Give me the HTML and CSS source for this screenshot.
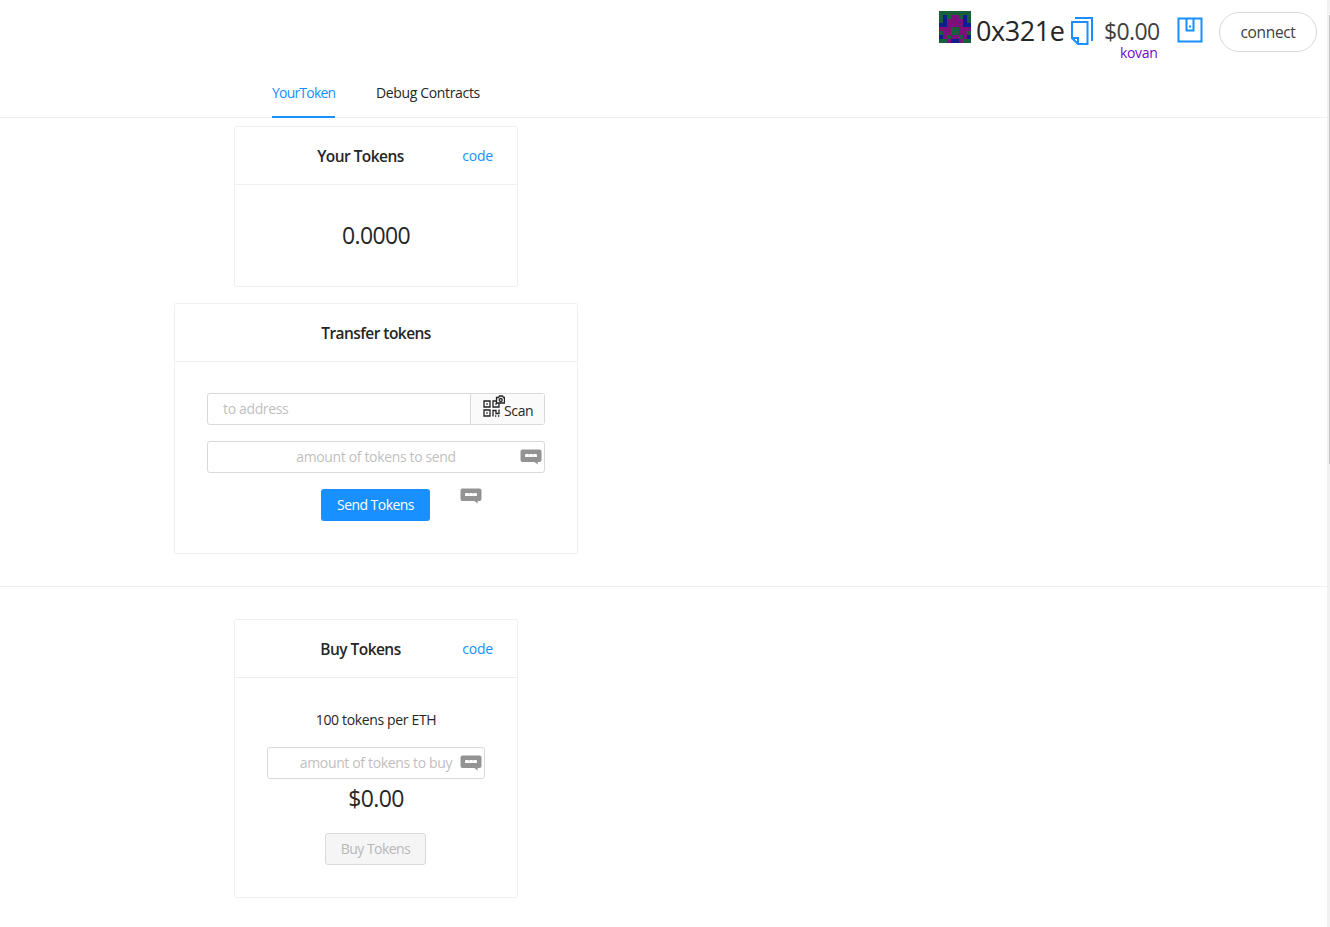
FILE: index.html
```html
<!DOCTYPE html>
<html lang="en">
<head>
<meta charset="utf-8">
<title>YourToken</title>
<link rel="stylesheet" href="styles.css">
</head>
<body>
<svg class="defs" width="0" height="0">
  <symbol id="bubble" viewBox="0 0 22 16">
    <path d="M2.500.500h17a2 2 0 0 1 2 2v8.500a2 2 0 0 1-2 2h-1.800v2.500l-3.200-2.500H2.500a2 2 0 0 1-2-2v-8.500a2 2 0 0 1 2-2z" fill="#939393"/>
    <path d="M5 5.500h12v2.500H5z" fill="#eee"/><path d="M5.500 6.500h3M9.500 6.500h3M13.500 6.500h3" stroke="#fff" stroke-width="3"/>
  </symbol>
</svg>
<div class="page">
  <header class="account">
    <svg class="blockie" viewBox="0 0 8 8" shape-rendering="crispEdges">
      <path fill="#7d107d" d="M0 0h8v8H0z"/>
      <path fill="#17603a" d="M0 0h8v1H0zM0 1h1v2H0zM7 1h1v2H7zM2 1h1v1H2zM5 1h1v1H5zM3 4h2v2H3zM0 5h1v1H0zM7 5h1v1H7zM2 6h1v1H2zM5 6h1v1H5zM0 7h2v1H0zM6 7h2v1H6z"/>
      <path fill="#0b1f91" d="M1 1h1v3H0V3h1zM6 1h1v2h1v1H6zM0 6h1v1H0zM7 6h1v1H7zM3 7h2v1H3z"/>
    </svg>
    <span class="address">0x321e</span>
    <svg class="copy" viewBox="0 0 24 29" fill="none" stroke="#1890ff" stroke-width="2"><path d="M5 2h17v23M2 6h15.500v22H8l-6-6zM2 22h6v6"/></svg>
    <div class="worth"><span class="balance">$0.00</span><span class="network">kovan</span></div>
    <svg class="wallet" viewBox="0 0 26 26" fill="none" stroke="#1890ff" stroke-width="2"><path d="M1.500 1.500h23v23h-23zM9.500 1.500v12h7v-12"/><path d="M12 9.500h2"/></svg>
    <button class="connect">connect</button>
  </header>
  <nav class="tabs"><a class="tab active">YourToken</a><a class="tab">Debug Contracts</a></nav>
  <main>
    <section class="card small">
      <div class="head"><h2>Your Tokens</h2><a class="code">code</a></div>
      <div class="body total"><span class="big">0.0000</span></div>
    </section>
    <section class="card wide">
      <div class="head"><h2>Transfer tokens</h2></div>
      <div class="body">
        <div class="field"><span class="ph left">to address</span>
          <div class="scan"><svg class="qr" viewBox="0 0 22 22" fill="none" stroke="#222" stroke-width="1.300"><path d="M1 6h6v6H1zM10 6h6v6h-6zM1 15h6v6H1zM10 21.500v-6h3v3h3v-4M3.300 9h1.400M12.300 9h1.400M3.300 18h1.400M12 21h1.300M15 21h1.300"/><path fill="#fafafa" d="M13.500 2.500h2l1-1.500h3l1 1.500h1v5.500h-8z"/><circle cx="17.700" cy="5" r="1.500"/></svg><span>Scan</span></div>
        </div>
        <div class="field center"><span class="ph">amount of tokens to send</span><svg class="bubble inside"><use href="#bubble"/></svg></div>
        <div class="send-row"><button class="send">Send Tokens</button><svg class="bubble beside"><use href="#bubble"/></svg></div>
      </div>
    </section>
    <hr>
    <section class="card small">
      <div class="head"><h2>Buy Tokens</h2><a class="code">code</a></div>
      <div class="body purchase">
        <div class="rate">100 tokens per ETH</div>
        <div class="field center"><span class="ph">amount of tokens to buy</span><svg class="bubble inside"><use href="#bubble"/></svg></div>
        <div class="cost"><span class="big">$0.00</span></div>
        <button class="buy" disabled>Buy Tokens</button>
      </div>
    </section>
  </main>
  <div class="scrollbar"><div class="thumb"></div></div>
</div>
</body>
</html>
```
FILE: styles.css
```css
* { box-sizing: border-box; }
body { margin: 0; background: #fff; color: #262626; font: 14px/22px "Open Sans", "Noto Sans", sans-serif; letter-spacing: -.35px; overflow: hidden; }
.defs { position: absolute; }
.page { position: relative; height: 927px; overflow: hidden; }
.account { display: flex; align-items: flex-start; height: 70px; padding: 11px 13px 0 939px; white-space: nowrap; }
.blockie { width: 32px; height: 32px; flex: none; }
.address { width: 88px; margin-left: 5px; font-size: 27px; line-height: 40px; letter-spacing: -.45px; }
.copy { width: 24px; height: 29px; margin: 5px 0 0 6px; flex: none; }
.worth { width: 58px; margin-left: 10px; padding-top: 7px; display: flex; flex-direction: column; }
.balance { font-size: 23px; line-height: 26px; letter-spacing: -.6px; color: #404040; }
.network { margin-left: 16px; line-height: 18px; color: #6a0dcc; }
.wallet { width: 26px; height: 26px; margin: 6px 0 0 15px; flex: none; }
button { font: inherit; letter-spacing: inherit; padding: 0; }
.connect { width: 98px; height: 40px; margin: 1px 0 0 16px; flex: none; border: 1px solid #d9d9d9; border-radius: 20px; background: #fff; color: #404040; font-size: 15.5px; }
.tabs { display: flex; height: 48px; padding-left: 272px; gap: 41px; border-bottom: 1px solid #f0f0f0; }
.tab { height: 48px; line-height: 46px; white-space: nowrap; }
.tab.active { width: 63px; color: #1890ff; border-bottom: 2px solid #1890ff; letter-spacing: -.8px; }
main { width: 1328px; padding-top: 8px; }
.card { border: 1px solid #f0f0f0; border-radius: 2px; }
.small { width: 284px; margin-left: 234px; }
.wide { width: 404px; margin: 16px 0 0 174px; height: 251px; }
.head { position: relative; height: 58px; display: flex; justify-content: center; align-items: center; border-bottom: 1px solid #f0f0f0; }
h2 { margin: 0; font-size: 15.5px; line-height: 24px; font-weight: 600; letter-spacing: -.55px; white-space: nowrap; }
.small h2 { margin-right: 31px; }
.code { position: absolute; right: 24px; top: 18px; letter-spacing: -.2px; }
.code { color: #1890ff; }
.body { padding: 31px 32px; }
.total { height: 101px; text-align: center; }
.big { font-size: 23px; line-height: 38px; letter-spacing: -.6px; }
.field { position: relative; height: 32px; display: flex; align-items: center; border: 1px solid #d9d9d9; border-radius: 3px; white-space: nowrap; }
.center { justify-content: center; margin-top: 16px; }
.ph { color: #bfbfbf; }
.left { flex: 1; padding-left: 15px; }
.scan { display: flex; width: 74px; height: 30px; padding: 2px 0 0 12px; border-left: 1px solid #d9d9d9; background: #fafafa; line-height: 30px; }
.qr { width: 22px; height: 22px; flex: none; margin: -1px -1px 0 0; }
.bubble { width: 22px; height: 16px; }
.inside { position: absolute; right: 2px; top: 7px; }
.send-row { position: relative; display: flex; justify-content: center; margin: 16px 1px 0 0; }
.send { width: 109px; height: 32px; border: 0; border-radius: 3px; background: #1890ff; color: #fff; letter-spacing: -.55px; }
.beside { position: absolute; left: 253px; top: -1px; }
hr { margin: 32px 0; border: 0; border-top: 1px solid #f0f0f0; }
.rate, .cost { text-align: center; }
.purchase { padding-bottom: 32px; }
.cost { height: 38px; }
.buy { display: block; width: 101px; height: 32px; margin: 16px 0 0 58px; border: 1px solid #d9d9d9; border-radius: 3px; background: #f5f5f5; color: #b8b8b8; letter-spacing: -.55px; }
.scrollbar { position: absolute; right: 0; top: 0; width: 3px; height: 927px; background: #f1f1f1; }
.thumb { width: 1px; height: 449px; margin: 15px 0 0 2px; background: #c1c1c1; }
```
